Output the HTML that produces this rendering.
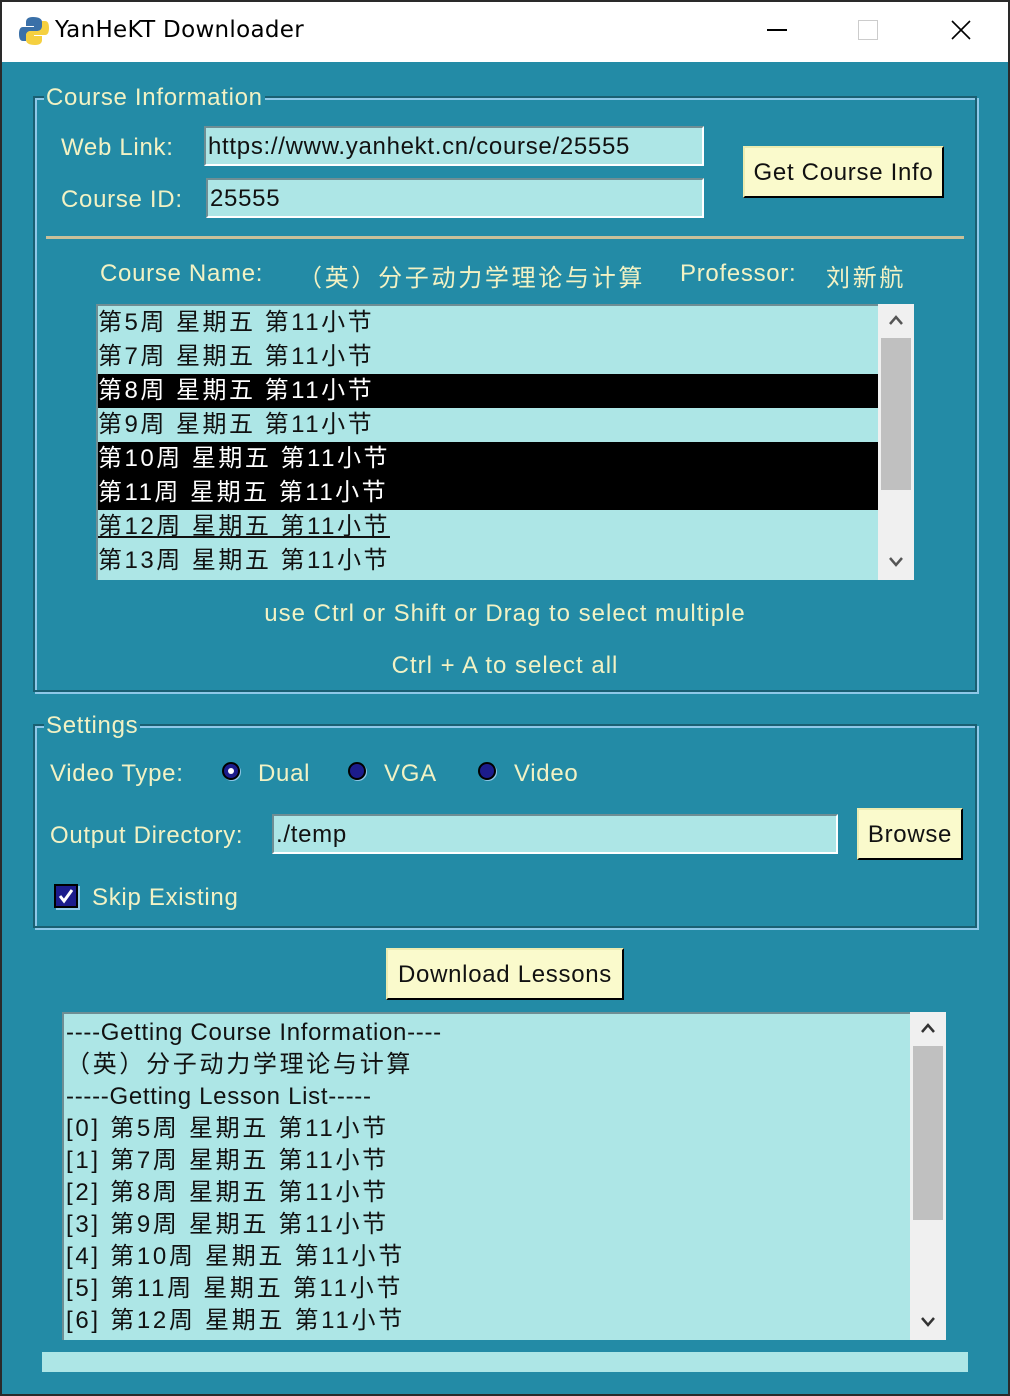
<!DOCTYPE html>
<html><head><meta charset="utf-8"><style>
*{margin:0;padding:0;box-sizing:border-box}
body{width:1010px;height:1396px;background:#2a2a2a;position:relative;overflow:hidden;font-family:"Liberation Sans","Noto Sans CJK SC",sans-serif;font-size:24px;letter-spacing:0.7px}
.a{position:absolute;white-space:nowrap}
#win{position:absolute;left:2px;top:2px;width:1006px;height:1392px;background:#238ba6}
#tb{position:absolute;left:2px;top:2px;width:1006px;height:60px;background:#fff}
.lbl{color:#f2f2c4}
.cj{letter-spacing:2.7px}
.frame{position:absolute;border:2px solid #1a5f72;box-shadow:inset 2px 2px 0 #8ec8e8, 2px 2px 0 #8ec8e8}
.legend{position:absolute;background:#238ba6;color:#f2f2c4;padding:0 2px;line-height:26px}
.ent{position:absolute;background:#ade6e6;border-top:2px solid #6e8e94;border-left:2px solid #6e8e94;border-bottom:2px solid #fff;border-right:2px solid #fff;color:#111;padding-left:2px;line-height:38px}
.btn{position:absolute;background:#fafacc;border:2px solid #ececb0;border-right-color:#000;border-bottom-color:#000;color:#111;text-align:center}
.row{height:34px;line-height:34px;padding-left:0;color:#111;letter-spacing:2.5px}
.sel{background:#000;color:#fff}
.sb{position:absolute;background:#f0f0f0}
.thumb{position:absolute;background:#c0c0c0}
.radio{position:absolute;width:18px;height:18px;border-radius:50%;background:#1c1c8c;border:2px solid #000;box-shadow:1px 1px 0 #8ec8e8}
</style></head><body>
<div id="win"></div>
<div id="tb"></div>
<svg class="a" style="left:18px;top:15px" width="32" height="32" viewBox="0 0 32 32"><path d="M15 2c-6 0-7 3-7 5v4h8v1H5c-3 0-4 3-4 7s1 7 4 7h3v-5c0-3 2-5 5-5h7c2 0 4-2 4-4V7c0-3-3-5-9-5z" fill="#3a70a8"/><path d="M17 30c6 0 7-3 7-5v-4h-8v-1h11c3 0 4-3 4-7s-1-7-4-7h-3v5c0 3-2 5-5 5h-7c-2 0-4 2-4 4v5c0 3 3 5 9 5z" fill="#f5d040"/></svg>
<div class="a" style="left:55px;top:17px;color:#000;font-family:'DejaVu Sans',sans-serif;font-size:23px;letter-spacing:0.3px">YanHeKT Downloader</div>
<div class="a" style="left:767px;top:29px;width:20px;height:2px;background:#000"></div>
<div class="a" style="left:858px;top:20px;width:20px;height:20px;border:1px solid #ccc"></div>
<svg class="a" style="left:951px;top:20px" width="20" height="20"><path d="M1 1L19 19M19 1L1 19" stroke="#000" stroke-width="1.6"/></svg>

<div class="frame" style="left:33px;top:96px;width:944px;height:596px"></div>
<div class="legend" style="left:44px;top:85px">Course Information</div>
<div class="a lbl" style="left:61px;top:134px">Web Link:</div>
<div class="a lbl" style="left:61px;top:186px">Course ID:</div>
<div class="ent" style="left:204px;top:126px;width:500px;height:40px">https://www.yanhekt.cn/course/25555</div>
<div class="ent" style="left:206px;top:178px;width:498px;height:40px">25555</div>
<div class="btn" style="left:743px;top:146px;width:201px;height:52px;line-height:50px">Get Course Info</div>
<div class="a" style="left:46px;top:236px;width:918px;height:3px;background:#c8c09a"></div>
<div class="a lbl" style="left:100px;top:260px">Course Name:</div>
<div class="a lbl cj" style="left:298px;top:258px">（英）分子动力学理论与计算</div>
<div class="a lbl" style="left:680px;top:260px">Professor:</div>
<div class="a lbl cj" style="left:826px;top:258px">刘新航</div>

<div class="a" style="left:96px;top:304px;width:818px;height:276px;background:#ade6e6;border-top:2px solid #6e8e94;border-left:2px solid #6e8e94;overflow:hidden">
<div class="row">第5周 星期五 第11小节</div>
<div class="row">第7周 星期五 第11小节</div>
<div class="row sel">第8周 星期五 第11小节</div>
<div class="row">第9周 星期五 第11小节</div>
<div class="row sel">第10周 星期五 第11小节</div>
<div class="row sel">第11周 星期五 第11小节</div>
<div class="row"><u>第12周 星期五 第11小节</u></div>
<div class="row">第13周 星期五 第11小节</div>
</div>
<div class="sb" style="left:878px;top:304px;width:36px;height:276px"></div>
<div class="thumb" style="left:881px;top:338px;width:30px;height:152px"></div>
<svg class="a" style="left:888px;top:314px" width="16" height="12"><path d="M2 10L8 3L14 10" stroke="#555" stroke-width="2.5" fill="none"/></svg>
<svg class="a" style="left:888px;top:556px" width="16" height="12"><path d="M2 2L8 9L14 2" stroke="#555" stroke-width="2.5" fill="none"/></svg>
<div class="a lbl" style="left:0;width:1010px;text-align:center;top:600px;letter-spacing:1px">use Ctrl or Shift or Drag to select multiple</div>
<div class="a lbl" style="left:0;width:1010px;text-align:center;top:652px;letter-spacing:1px">Ctrl + A to select all</div>

<div class="frame" style="left:33px;top:724px;width:944px;height:204px"></div>
<div class="legend" style="left:44px;top:713px">Settings</div>
<div class="a lbl" style="left:50px;top:760px">Video Type:</div>
<div class="radio" style="left:222px;top:762px"><div style="position:absolute;left:4px;top:4px;width:6px;height:6px;background:#fff;border-radius:50%"></div></div>
<div class="a lbl" style="left:258px;top:760px">Dual</div>
<div class="radio" style="left:348px;top:762px"></div>
<div class="a lbl" style="left:384px;top:760px">VGA</div>
<div class="radio" style="left:478px;top:762px"></div>
<div class="a lbl" style="left:514px;top:760px">Video</div>
<div class="a lbl" style="left:50px;top:822px">Output Directory:</div>
<div class="ent" style="left:272px;top:814px;width:566px;height:40px">./temp</div>
<div class="btn" style="left:857px;top:808px;width:106px;height:52px;line-height:50px">Browse</div>
<div class="a" style="left:54px;top:884px;width:24px;height:24px;background:#1c1c8c;border:2px solid #000;box-shadow:2px 2px 0 #8ec8e8"><svg width="20" height="20" style="position:absolute;left:0;top:0"><path d="M4 10l4 5 8-11" stroke="#fff" stroke-width="3" fill="none"/></svg></div>
<div class="a lbl" style="left:92px;top:884px">Skip Existing</div>

<div class="btn" style="left:386px;top:948px;width:238px;height:52px;line-height:50px">Download Lessons</div>

<div class="a" style="left:62px;top:1012px;width:884px;height:328px;background:#ade6e6;border-top:2px solid #6e8e94;border-left:2px solid #6e8e94;overflow:hidden;line-height:32px;color:#111;padding-left:2px;padding-top:3px">
----Getting Course Information----<br><span class="cj">（英）分子动力学理论与计算</span><br>-----Getting Lesson List-----<br>
<span class="cj">[0]&nbsp;第5周 星期五 第11小节</span><br>
<span class="cj">[1]&nbsp;第7周 星期五 第11小节</span><br>
<span class="cj">[2]&nbsp;第8周 星期五 第11小节</span><br>
<span class="cj">[3]&nbsp;第9周 星期五 第11小节</span><br>
<span class="cj">[4]&nbsp;第10周 星期五 第11小节</span><br>
<span class="cj">[5]&nbsp;第11周 星期五 第11小节</span><br>
<span class="cj">[6]&nbsp;第12周 星期五 第11小节</span>
</div>
<div class="sb" style="left:910px;top:1012px;width:36px;height:328px"></div>
<div class="thumb" style="left:913px;top:1046px;width:30px;height:174px"></div>
<svg class="a" style="left:920px;top:1022px" width="16" height="12"><path d="M2 10L8 3L14 10" stroke="#333" stroke-width="2.5" fill="none"/></svg>
<svg class="a" style="left:920px;top:1316px" width="16" height="12"><path d="M2 2L8 9L14 2" stroke="#333" stroke-width="2.5" fill="none"/></svg>
<div class="a" style="left:42px;top:1352px;width:926px;height:20px;background:#ade6e6"></div>
</body></html>
